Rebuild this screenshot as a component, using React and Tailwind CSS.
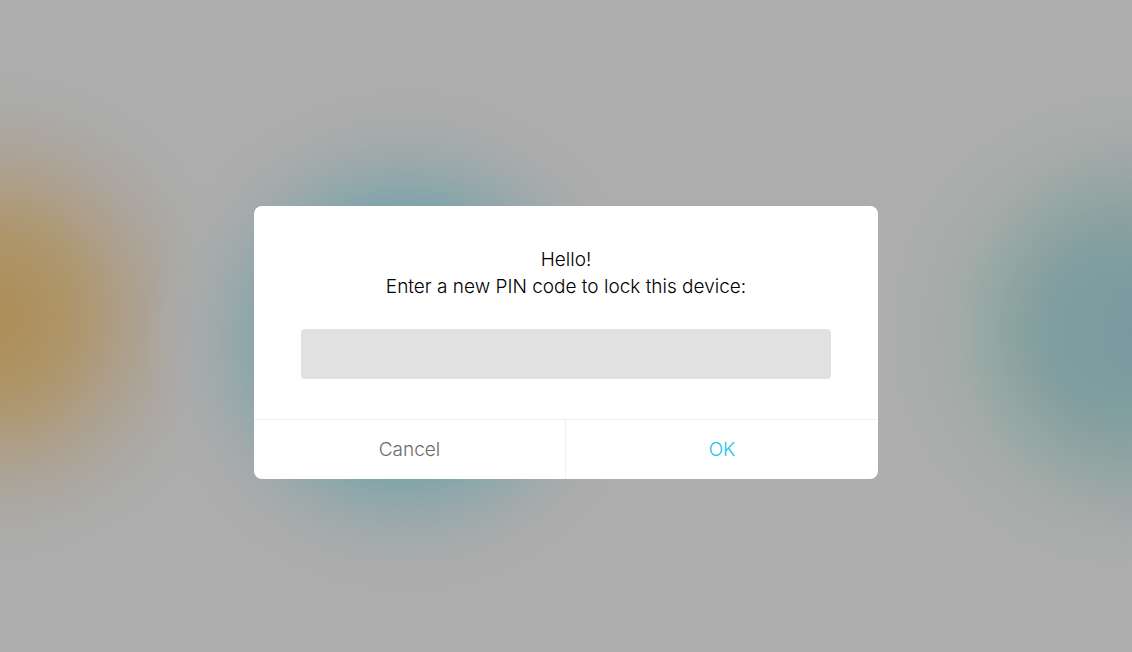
const backdrop = [
  "bg-[#adadad]",
  "bg-[radial-gradient(circle_at_calc(100%_+_50px)_331px,rgba(112,122,160,0.16)_0px,rgba(112,122,160,0.15)_50px,rgba(112,122,160,0.07)_90px,rgba(112,122,160,0.1)_130px,rgba(112,122,160,0.07)_170px,rgba(112,122,160,0)_220px),radial-gradient(circle_at_calc(100%_-_4px)_331px,#7d9ea0_0px,#7f9fa0_50px,#83a2a1_85px,#8ba59f_105px,#95a9a3_135px,#a3aba8_175px,rgba(170,172,172,0.9)_210px,rgba(173,173,173,0)_250px),radial-gradient(circle_at_405px_341px,#72a0a7_0px,#76a1a7_100px,#80a4a9_135px,#8fa7ab_158px,#9ba9ab_180px,rgba(164,171,171,0.9)_205px,rgba(171,171,172,0.5)_232px,rgba(173,173,173,0)_260px),radial-gradient(circle_at_-10px_316px,#ad8e58_0px,#ad905f_40px,#ae9568_75px,#ae9977_105px,#ad9f89_135px,#aca498_165px,#aba8a3_195px,#acacab_220px,#adadad_255px)]",
].join(" ");

export default function App() {
  return (
    <main
      className={`flex min-h-screen items-center justify-center px-4 pt-8 font-['Inter','Liberation_Sans',sans-serif] text-[19px] leading-[27px] font-light ${backdrop}`}
    >
      <form
        role="dialog"
        aria-labelledby="pin-title"
        onSubmit={(event) => event.preventDefault()}
        className="w-full max-w-[624px] overflow-hidden rounded-lg bg-white"
      >
        <div className="px-[47px] py-10 text-center">
          <h1 id="pin-title">Hello!</h1>
          <label htmlFor="pin">Enter a new PIN code to lock this device:</label>
          <input
            id="pin"
            type="password"
            className="mt-[29px] block h-[50px] w-full rounded bg-[#e1e1e1] px-4 text-center outline-none"
          />
        </div>
        <div className="grid h-[60px] grid-cols-2 border-t border-[#f0f0f0]">
          <button type="button" className="border-r border-[#f0f0f0] text-[#6b6b6b]">
            Cancel
          </button>
          <button type="submit" className="text-[#17c3e6]">
            OK
          </button>
        </div>
      </form>
    </main>
  );
}
